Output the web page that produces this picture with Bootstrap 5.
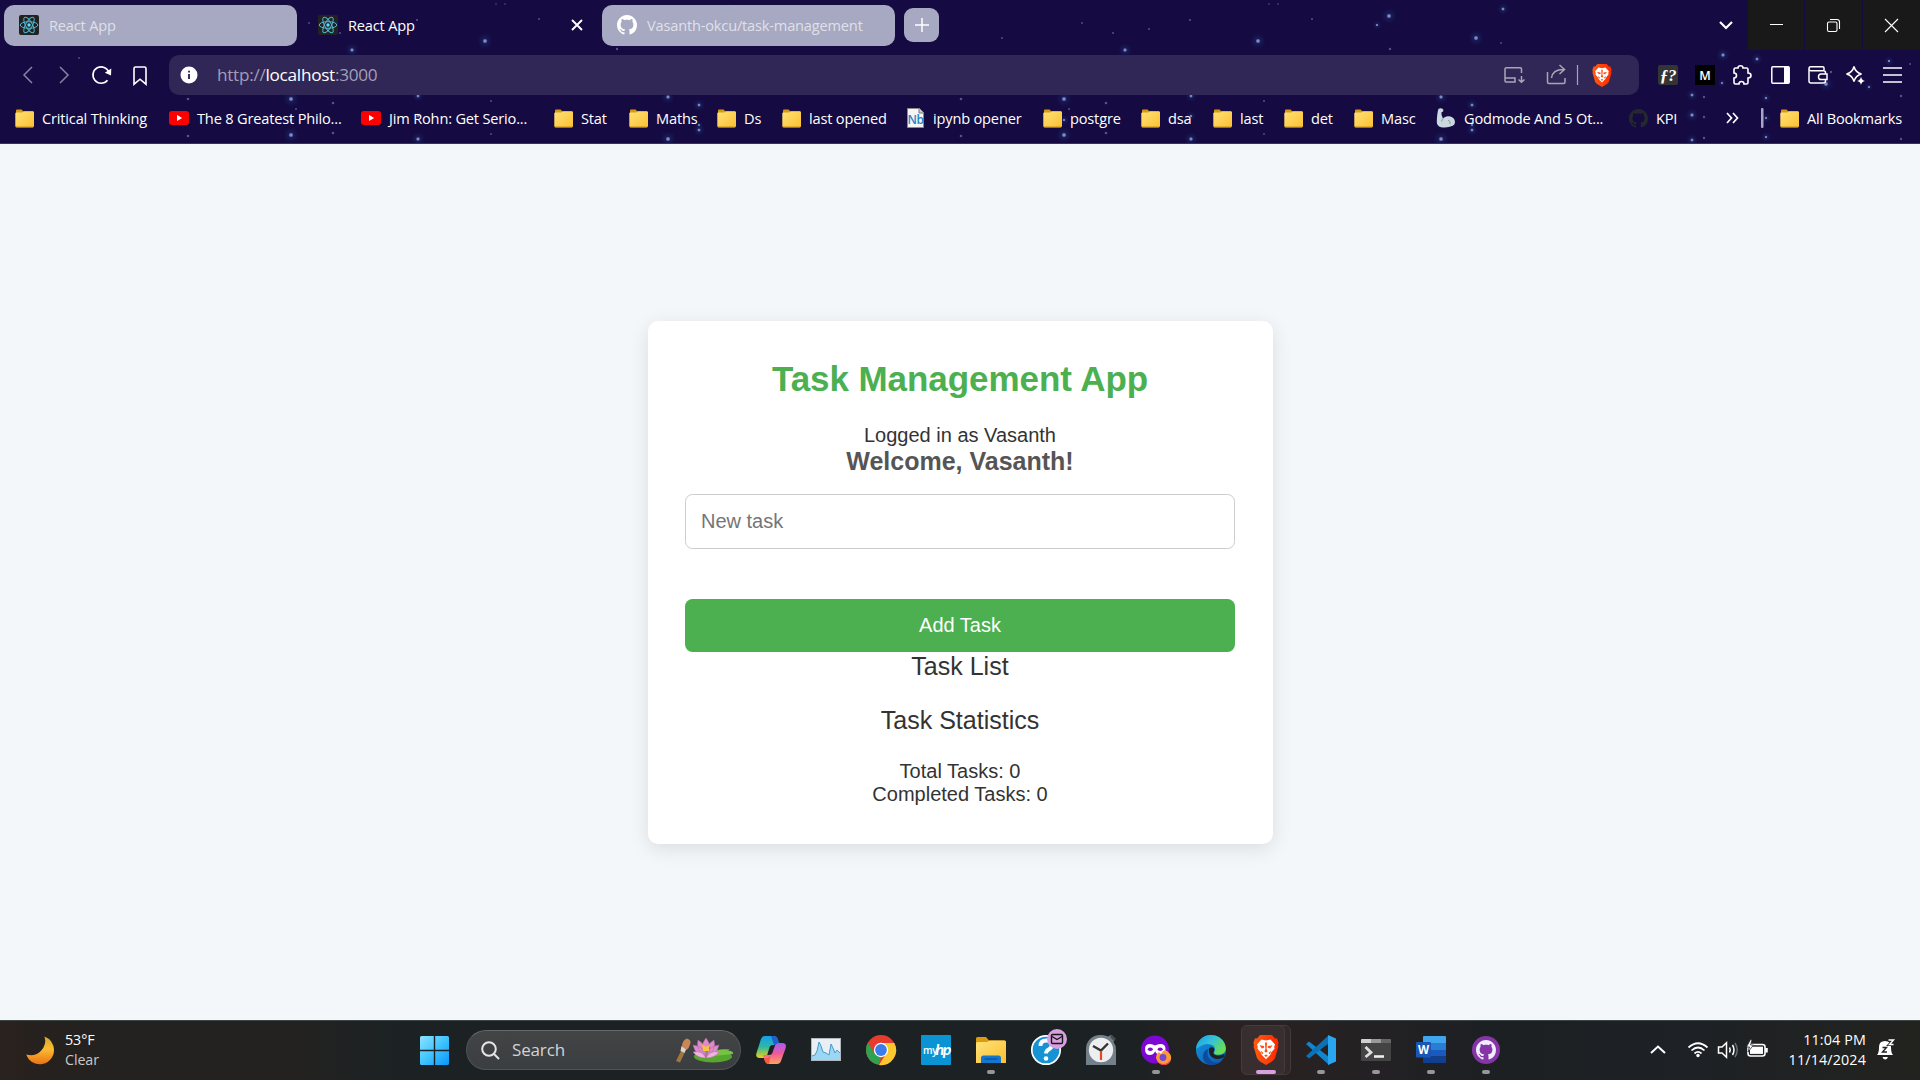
<!DOCTYPE html>
<html lang="en">
<head>
<meta charset="utf-8">
<meta name="viewport" content="width=device-width, initial-scale=1">
<title>React App</title>
<link href="https://cdn.jsdelivr.net/npm/bootstrap@5.3.0/dist/css/bootstrap.min.css" rel="stylesheet">
<style>
  body{width:1920px;height:1080px;overflow:hidden;background:#f3f7fa;font-family:"Open Sans","Noto Sans",sans-serif;font-size:15px;line-height:20px}
  svg{display:block;flex:none;overflow:visible}
  .chrome{height:144px;background:#150b42;color:#fff;border-bottom:1px solid #3a3163;font-size:14.6px;letter-spacing:-.18px}
  .stars{z-index:0;opacity:.75}
  .tabstrip{height:50px;padding:5px 0 4px 4px}
  .tab{height:41px;border-radius:10px;padding:0 0 1px 15px;gap:10px}
  .tab-a{width:293px}.tab-b{width:305px;padding:0 20px 1px 21px}.tab-c{width:293px}
  .tab-idle{background:#a7a8c1;color:#dfe0ea}
  .tab-new{width:35px;height:34px;border-radius:9px;background:#a7a8c1;margin:3px 0 0 9px}
  .winctl{margin-top:-5px}
  .tabmenu{margin-right:12px}
  .winbtn{width:57px;height:50px;background:#191919;margin-left:1px}
  .winbtn:first-of-type{width:56px}
  .toolrow{height:50px}
  .navset{width:169px;padding-left:8.5px}
  .navset>div,.extset>div{width:37.5px}
  .address{width:1470px;height:40px;border-radius:10px;background:#302756;padding:0 24px 0 11px}
  .url{font-size:17.2px;letter-spacing:-.28px;color:#a39db8;margin-left:19px}
  .extset{padding-left:10px}
  .bookmarks{display:grid;height:43px;padding:0 0 7px 15px;grid-template-columns:154px 192px 193px 75px 88px 65px 124px 137px 98px 72px 71px 70px 82px 193px 97px 35px 19px 140px;white-space:nowrap}
  .bm{gap:8px}
  .viewport{height:876px}
  .panel{width:625px;height:523px;border-radius:10px;background:#fff;padding:37.5px;box-shadow:0 5px 19px rgba(0,0,0,.1);font-family:"Liberation Sans",Arial,sans-serif;font-size:20px;line-height:23px;color:#333}
  .panel h1{font-size:35px;line-height:41px;font-weight:700;letter-spacing:-.06px;color:#4caf50;margin:0 0 25px}
  .panel h2{font-size:25px;line-height:29px;font-weight:700;color:#555;margin:0 0 18px}
  .panel h3{font-size:25px;line-height:29px;font-weight:400;margin:0 0 25px;color:#333}
  .panel .form-control{height:55px;font-size:20px;font-family:inherit;border:1px solid #ccc;border-radius:7.5px;padding:0 15px 1px;margin-bottom:50px}
  .form-control::placeholder{color:#757575;opacity:1}
  .panel .btn{height:53px;background:#4caf50;color:#fff;border:0;border-radius:7.5px;font-size:20px;padding:0 0 2px}
  .taskbar{height:60px;padding-bottom:1px;border-top:1px solid #3d4646;color:#fff;background:linear-gradient(90deg,#2a221e 0,#24211f 60px,#232220 300px,#1c2224 400px,#1c2123 1130px,#2b2122 1240px,#252123 1340px,#1c2023 1500px,#1e2125 1700px,#22231f 1920px);font-size:14.3px;letter-spacing:-.1px}
  .weather{flex:none;width:407px;padding:0 0 1px 26px;gap:11px}
  .dim{color:#c8c8c8}
  .searchbox{flex:none;width:275px;height:40px;border-radius:20px;background:linear-gradient(#424446,#3b3e40);border:1px solid #505355;border-top-color:#66696a;padding:0 7px 0 14px;margin:0 2px 0 4px;font-size:17px;letter-spacing:-.15px;color:#d2d3d4}
  .app{flex:none;width:55px;height:58px}
  .app::after{content:"";position:absolute;left:24px;top:49px;width:8px;height:4px;border-radius:2px;background:transparent}
  .open::after{background:#969696}
  .focused::after{left:18px;width:20px;background:#d9a0e0}
  .focused>i{left:3px;top:4px;width:44px;height:50px;border-radius:6px;background:#382e30;border:1px solid #453b3d}
  .focused>i:first-child{left:9px;background:#30282a}
  .tray{padding-right:26px}
  .clock{width:112px;padding:0 10px 1px 0;letter-spacing:.15px}
</style>
<script src="https://cdn.jsdelivr.net/npm/bootstrap@5.3.0/dist/js/bootstrap.bundle.min.js"></script>
</head>
<body>
<svg width="0" height="0" class="position-absolute">
  <defs>
    <linearGradient id="gFold" x1="0" y1="0" x2="1" y2="1"><stop offset="0" stop-color="#ffe27a"/><stop offset="1" stop-color="#fbc02f"/></linearGradient>
    <linearGradient id="gWin" x1="0" y1="0" x2="1" y2="1"><stop offset="0" stop-color="#8be4ff"/><stop offset=".5" stop-color="#40c4ff"/><stop offset="1" stop-color="#0a96f8"/></linearGradient>
    <linearGradient id="gMoon" x1="0" y1="0" x2="0" y2="1"><stop offset="0" stop-color="#e0a030"/><stop offset=".45" stop-color="#f9bd30"/><stop offset="1" stop-color="#ec7116"/></linearGradient>
    <linearGradient id="gCopA" x1="0" y1="0" x2="0" y2="1"><stop offset="0" stop-color="#12a0ec"/><stop offset=".5" stop-color="#2fb8a0"/><stop offset="1" stop-color="#f4d016"/></linearGradient>
    <linearGradient id="gCopB" x1="0" y1="0" x2="0" y2="1"><stop offset="0" stop-color="#a45cf5"/><stop offset=".5" stop-color="#f0599c"/><stop offset="1" stop-color="#ffa45a"/></linearGradient>
    <linearGradient id="gEdge" x1="0" y1="0" x2="1" y2=".6"><stop offset="0" stop-color="#1a9be0"/><stop offset=".5" stop-color="#33c1dc"/><stop offset="1" stop-color="#6be04c"/></linearGradient>
    <linearGradient id="gEdge2" x1="0" y1="0" x2="1" y2="1"><stop offset="0" stop-color="#1393df"/><stop offset="1" stop-color="#0c58ad"/></linearGradient>
    <linearGradient id="gBrave" x1="0" y1="0" x2="1" y2="0"><stop offset="0" stop-color="#ff5b10"/><stop offset="1" stop-color="#ff2800"/></linearGradient>
    <radialGradient id="gStar"><stop offset="0" stop-color="#cdd2ff"/><stop offset=".18" stop-color="#8d95d6"/><stop offset=".32" stop-color="#24418a" stop-opacity=".4"/><stop offset="1" stop-color="#123a78" stop-opacity="0"/></radialGradient>
    <symbol id="folder" viewBox="0 0 19 19"><path d="M1 1.500q0-1 1-1h4.500l2 2H18v3H1z" fill="#d99a10"/><path d="M.3 4.500q0-1 1-1h6l1.500-1.300h9q1.200 0 1.200 1.200v13.400q0 1.400-1.200 1.400H1.600Q.3 18.200.3 16.800z" fill="url(#gFold)"/><path d="M.5 17.300h18.300q-.3 1.200-1.300 1.200H1.600q-1 0-1.100-1.200z" fill="#d9a22a"/></symbol>
    <symbol id="react" viewBox="0 0 20 20"><rect width="20" height="20" rx="2" fill="#222"/><g fill="none" stroke="#4fb6d0" stroke-width="1"><ellipse cx="10" cy="10" rx="8.800" ry="3.300"/><ellipse cx="10" cy="10" rx="8.800" ry="3.300" transform="rotate(60 10 10)"/><ellipse cx="10" cy="10" rx="8.800" ry="3.300" transform="rotate(120 10 10)"/></g><circle cx="10" cy="10" r="1.700" fill="#61dafb"/></symbol>
    <symbol id="github" viewBox="0 0 16 16"><path d="M8 0C3.58 0 0 3.58 0 8c0 3.54 2.29 6.53 5.47 7.59.4.07.55-.17.55-.38 0-.19-.01-.82-.01-1.49-2.01.37-2.53-.49-2.69-.94-.09-.23-.48-.94-.82-1.13-.28-.15-.68-.52-.01-.53.63-.01 1.08.58 1.23.82.72 1.21 1.87.87 2.33.66.07-.52.28-.87.51-1.07-1.78-.2-3.64-.89-3.64-3.95 0-.87.31-1.59.82-2.15-.08-.2-.36-1.02.08-2.12 0 0 .67-.21 2.2.82.64-.18 1.32-.27 2-.27s1.36.09 2 .27c1.53-1.04 2.2-.82 2.2-.82.44 1.1.16 1.92.08 2.12.51.56.82 1.27.82 2.15 0 3.07-1.87 3.75-3.65 3.95.29.25.54.73.54 1.48 0 1.07-.01 1.93-.01 2.2 0 .21.15.46.55.38A8.01 8.01 0 0 0 16 8c0-4.42-3.58-8-8-8z" fill="currentColor"/></symbol>
    <symbol id="youtube" viewBox="0 0 20 14"><rect width="20" height="14" rx="3" fill="#f00"/><path d="M8 4l5.200 3L8 10z" fill="#fff"/></symbol>
    <symbol id="brave" viewBox="0 0 26 30"><g stroke="none"><path d="M7 0h12l3 3.400 2-.2 1.600 4.600-.6 2.200.4 1.500L22 23q-1 2-3 3.400L13 30l-6-3.600Q5 25 4 23L.6 11.500l.4-1.500L.4 7.800 2 3.200l2 .2z" fill="url(#gBrave)"/><path d="M8.500 4.500l4.500 1 4.500-1 4.500 5-.8 2.300.3 2-3.500 4-.5 1.700-4.500 4.700-4.500-4.700-.5-1.700-3.500-4 .3-2L4 9.500z" fill="#fff"/><path d="M6.500 10.300l4.500.8.3 1.500-2.300.8zM19.500 10.300l-4.500.8-.3 1.500 2.300.8zM12 7.500h2l-.4 6.500 1 2.500-1.600 1-1.600-1 1-2.500zM7.500 15.500l3 2.500-1.300 1.200zM18.500 15.500l-3 2.500 1.300 1.200zM11.200 20.500l1.800-1 1.800 1-1.800 1.500z" fill="#fb4a10"/></g></symbol>
    <g id="sky" fill="url(#gStar)">
      <circle cx="352" cy="50" r="7"/><circle cx="485" cy="41" r="8"/><circle cx="616" cy="16" r="8"/><circle cx="604" cy="25" r="4.500"/><circle cx="703" cy="38" r="8"/><circle cx="730" cy="9" r="6"/><circle cx="291" cy="99" r="8"/><circle cx="418" cy="96" r="6"/><circle cx="668" cy="97" r="7"/><circle cx="699" cy="105" r="6"/><circle cx="291" cy="135" r="8"/><circle cx="418" cy="139" r="7"/><circle cx="668" cy="139" r="8"/><circle cx="699" cy="130" r="6"/><circle cx="291" cy="120" r="5"/><circle cx="418" cy="116" r="5"/><circle cx="699" cy="125" r="4"/>
      <g fill="#6c6aa4"><circle cx="309" cy="23" r=".9"/><circle cx="79" cy="58" r=".9"/><circle cx="496" cy="4" r=".8"/><circle cx="505" cy="4" r=".8"/><circle cx="539" cy="19" r="1"/><circle cx="340" cy="33" r="1"/><circle cx="376" cy="29" r="1"/><circle cx="417" cy="20" r="1.100"/><circle cx="229" cy="38" r="1"/><circle cx="617" cy="49" r="1.200"/><circle cx="8" cy="16" r="1"/><circle cx="728" cy="43" r=".9"/><circle cx="68" cy="42" r=".9"/><circle cx="188" cy="99" r="1.300"/><circle cx="296" cy="109" r="1"/><circle cx="333" cy="103" r="1.300"/><circle cx="491" cy="101" r="1"/><circle cx="188" cy="136" r="1.300"/><circle cx="333" cy="133" r="1.300"/><circle cx="491" cy="134" r=".9"/></g>
    </g>
  </defs>
</svg>

<header class="chrome position-relative overflow-hidden">
  <svg class="stars position-absolute top-0 start-0" width="1920" height="143">
    <use href="#sky"/><use href="#sky" x="773"/>
    <g fill="url(#gStar)"><circle cx="1723" cy="55" r="7"/><circle cx="1757" cy="59" r="6"/><circle cx="1692" cy="95" r="6"/><circle cx="1692" cy="115" r="7"/><circle cx="1692" cy="140" r="6"/><circle cx="1766" cy="98" r="5"/><circle cx="1766" cy="118" r="5"/><circle cx="1766" cy="137" r="5"/><circle cx="1826" cy="84" r="8"/><circle cx="1889" cy="61" r="5"/><circle cx="1722" cy="83" r="4"/><circle cx="1869" cy="87" r="4"/></g>
    <g fill="#6c6aa4"><circle cx="1704" cy="97" r="1.200"/><circle cx="1704" cy="117" r="1.200"/><circle cx="1704" cy="138" r="1.200"/><circle cx="1831" cy="72" r="1.200"/><circle cx="1910" cy="64" r="1"/><circle cx="1901" cy="96" r="1.200"/><circle cx="1901" cy="139" r="1.200"/></g>
  </svg>

  <div class="tabstrip position-relative d-flex">
    <div class="tab tab-a tab-idle d-flex align-items-center"><svg width="20" height="20"><use href="#react"/></svg>React App</div>
    <div class="tab tab-b d-flex align-items-center"><svg width="20" height="20"><use href="#react"/></svg>React App
      <svg class="ms-auto" width="10" height="10" stroke="#fff" stroke-width="1.900"><path d="M0 0l10 10M10 0L0 10"/></svg></div>
    <div class="tab tab-c tab-idle d-flex align-items-center"><svg class="text-white" width="20" height="20"><use href="#github"/></svg>Vasanth-okcu/task-management</div>
    <div class="tab-new d-flex align-items-center justify-content-center"><svg width="14" height="14" stroke="#fff" stroke-width="1.500"><path d="M7 0v14M0 7h14"/></svg></div>
    <div class="winctl ms-auto d-flex">
      <svg class="tabmenu" width="14" height="50" fill="none" stroke="#fff" stroke-width="2.200"><path d="M-1 22l6 6 6-6"/></svg>
      <div class="winbtn d-flex align-items-center justify-content-center"><svg width="13" height="2"><path d="M0 .5h13" stroke="#fff"/></svg></div>
      <div class="winbtn d-flex align-items-center justify-content-center"><svg width="13" height="13" fill="none" stroke="#fff" stroke-width="1.100"><rect x=".5" y="3" width="9.500" height="9.500" rx="1.500"/><path d="M3 .5h7q2.500 0 2.500 2.500v7"/></svg></div>
      <div class="winbtn d-flex align-items-center justify-content-center"><svg width="13" height="13" stroke="#fff" stroke-width="1.100"><path d="M0 0l13 13M13 0L0 13"/></svg></div>
    </div>
  </div>

  <div class="toolrow position-relative d-flex align-items-center">
    <div class="navset d-flex">
      <div><svg class="mx-auto" width="9" height="18" fill="none" stroke="#8983a4" stroke-width="1.500"><path d="M9 1L1 9l8 8"/></svg></div>
      <div><svg class="mx-auto" width="9" height="18" fill="none" stroke="#8983a4" stroke-width="1.500"><path d="M0 1l8 8-8 8"/></svg></div>
      <div><svg class="mx-auto" width="20" height="18" fill="none" stroke="#fff" stroke-width="1.700"><path d="M15.500 14.300A8.200 8.200 0 1 1 17 6.500"/><path d="M12.800 6.800L19 9.500l.3-7z" fill="#fff" stroke="none"/></svg></div>
      <div><svg class="mx-auto" width="14" height="19" fill="none" stroke="#fff" stroke-width="1.600"><path d="M1 2.500Q1 1 2.500 1h9Q13 1 13 2.500v15.700l-6-5-6 5z"/></svg></div>
    </div>
    <div class="address d-flex align-items-center">
      <svg width="18" height="18"><circle cx="9" cy="9" r="8.500" fill="#fff"/><path d="M9 8v5M9 4.800v1.800" stroke="#302756" stroke-width="1.900"/></svg>
      <div class="url">http://<span class="text-white">localhost</span>:3000</div>
      <svg class="ms-auto" width="112" height="24" fill="none" stroke="#aaa5b5" stroke-width="1.500">
        <path d="M2 18V6q0-1.300 1.300-1.300h14Q18.500 4.700 18.500 6v4M2 15h10v4H3q-1 0-1-1zM18.500 13v6M15.500 16.500l3 2.700 3-2.700"/>
        <path d="M44.500 9v10q0 1.500 1.500 1.500h14.500q1.500 0 1.500-1.500v-4M48.500 15q1-8.500 12-8.500M56.500 2l5 4.500-5 4.500"/>
        <path d="M74.500 2v20" stroke-width="1.200"/>
        <use href="#brave" x="88" y="1" width="22" height="23"/>
      </svg>
    </div>
    <div class="extset d-flex align-items-center">
      <div><svg class="mx-auto" width="20" height="20"><rect width="20" height="20" rx="2" fill="#343434"/><text x="10" y="15.500" text-anchor="middle" font-family="Liberation Serif,serif" font-size="17" font-weight="700" font-style="italic" fill="#fff">ƒ?</text></svg></div>
      <div><svg class="mx-auto" width="20" height="20"><rect width="20" height="20" fill="#000"/><text x="10" y="14.500" text-anchor="middle" font-family="Open Sans,sans-serif" font-size="12.500" font-weight="600" fill="#fff">M</text></svg></div>
      <div><svg class="mx-auto" width="20" height="20" fill="none" stroke="#fff" stroke-width="1.600"><path d="M1 4.500Q1 3 2.500 3H5Q5 .8 7.500.8T10 3h3.500q1.500 0 1.500 1.500V8q3 0 3 2.500T15 13v4.500q0 1.500-1.500 1.500H11q0-2.500-2.500-2.500T6 19H2.500Q1 19 1 17.500V13q2.500 0 2.500-2.500T1 8z"/></svg></div>
      <div><svg class="mx-auto" width="19" height="18"><rect x=".8" y=".8" width="17.400" height="16.400" rx="1" fill="none" stroke="#fff" stroke-width="1.500"/><path d="M13 1h5v16h-5z" fill="#fff"/></svg></div>
      <div><svg class="mx-auto" width="20" height="18" fill="none" stroke="#fff" stroke-width="1.500"><path d="M16 4V2q0-1.200-1.200-1.200H3Q1 .8 1 2.500V15q0 2 2 2h12q2.500 0 2.500-2v-1.500M1 3q0 1.700 2 1.700h12.500q2 0 2 2V8M19 8h-6q-2.500 0-2.500 2.800t2.500 2.700h6z"/></svg></div>
      <div><svg class="mx-auto" width="20" height="20"><path d="M9 1.500q1.500 6 7.500 7.500-6 1.500-7.500 7.500Q7.500 10.500 1.500 9 7.500 7.500 9 1.500z" fill="none" stroke="#fff" stroke-width="1.500"/><path d="M16 11.500q.6 3.900 4 4.500-3.400.6-4 4-.6-3.400-4-4 3.400-.6 4-4.500z" fill="#fff"/></svg></div>
      <div><svg class="mx-auto" width="19" height="16" stroke="#fff" stroke-width="1.500"><path d="M0 1h19M0 8h19M0 15h19"/></svg></div>
    </div>
  </div>

  <nav class="bookmarks position-relative align-items-center">
    <div class="bm d-flex align-items-center"><svg width="19" height="19"><use href="#folder"/></svg>Critical Thinking</div>
    <div class="bm d-flex align-items-center"><svg width="20" height="14"><use href="#youtube"/></svg>The 8 Greatest Philo...</div>
    <div class="bm d-flex align-items-center"><svg width="20" height="14"><use href="#youtube"/></svg>Jim Rohn: Get Serio...</div>
    <div class="bm d-flex align-items-center"><svg width="19" height="19"><use href="#folder"/></svg>Stat</div>
    <div class="bm d-flex align-items-center"><svg width="19" height="19"><use href="#folder"/></svg>Maths</div>
    <div class="bm d-flex align-items-center"><svg width="19" height="19"><use href="#folder"/></svg>Ds</div>
    <div class="bm d-flex align-items-center"><svg width="19" height="19"><use href="#folder"/></svg>last opened</div>
    <div class="bm d-flex align-items-center"><svg width="19" height="20"><path d="M1.500.5h12l4 4v15h-16z" fill="#f5f5f5" stroke="#888"/><path d="M13 .5v4.500h4.500" fill="#ccc" stroke="#777"/><text x="9.500" y="16" text-anchor="middle" font-family="Open Sans,sans-serif" font-size="12" font-weight="600" fill="#2a82c4" letter-spacing="-.5">Nb</text></svg>ipynb opener</div>
    <div class="bm d-flex align-items-center"><svg width="19" height="19"><use href="#folder"/></svg>postgre</div>
    <div class="bm d-flex align-items-center"><svg width="19" height="19"><use href="#folder"/></svg>dsa</div>
    <div class="bm d-flex align-items-center"><svg width="19" height="19"><use href="#folder"/></svg>last</div>
    <div class="bm d-flex align-items-center"><svg width="19" height="19"><use href="#folder"/></svg>det</div>
    <div class="bm d-flex align-items-center"><svg width="19" height="19"><use href="#folder"/></svg>Masc</div>
    <div class="bm d-flex align-items-center"><svg width="20" height="20"><path d="M2.500.8Q5-.5 6.500.8q1.500 1.300.6 2.600L5.500 4.200q-.6 2.600 1.500 6.300 1.500-2 4.700-2.200 5-.3 6.800 3.500 1.500 4-1.800 6Q11 20.500 5 19.200.8 18 .8 14 1 5 2.500.8z" fill="#cbd8df"/><path d="M7 10.500q-1.500 1.500-1.300 3M12 12q3 1.300 2 4" fill="none" stroke="#8498a4"/></svg>Godmode And 5 Ot...</div>
    <div class="bm d-flex align-items-center"><svg width="19" height="19" color="#24292e"><use href="#github"/></svg>KPI</div>
    <svg width="12" height="10" fill="none" stroke="#fff" stroke-width="1.700"><path d="M1 0l4.500 5L1 10M7 0l4.500 5L7 10"/></svg>
    <svg width="3" height="20"><rect width="2.500" height="20" rx="1" fill="#a9a6c6"/></svg>
    <div class="bm d-flex align-items-center"><svg width="19" height="19"><use href="#folder"/></svg>All Bookmarks</div>
  </nav>
</header>

<main class="viewport d-flex align-items-center justify-content-center">
  <section class="panel text-center">
    <h1>Task Management App</h1>
    <div>Logged in as Vasanth</div>
    <h2>Welcome, Vasanth!</h2>
    <input class="form-control" type="text" placeholder="New task">
    <button class="btn w-100 d-block" type="button">Add Task</button>
    <h3>Task List</h3>
    <h3>Task Statistics</h3>
    <div>Total Tasks: 0</div>
    <div>Completed Tasks: 0</div>
  </section>
</main>

<footer class="taskbar d-flex align-items-center">
  <div class="weather d-flex align-items-center">
    <svg width="28" height="28"><path d="M18.500.5A14.500 14.500 0 0 1 28 14 14.200 14.200 0 0 1 .3 18.500 14.500 14.500 0 0 0 18.500.5z" fill="url(#gMoon)"/></svg>
    <div>53°F<br><span class="dim">Clear</span></div>
  </div>
  <div class="app position-relative d-flex align-items-center justify-content-center"><svg width="29" height="29" fill="url(#gWin)"><path d="M1.500 0H13.800v13.800H0V1.500Q0 0 1.500 0zM15.200 0h12.300Q29 0 29 1.500v12.300H15.200zM0 15.200h13.800V29H1.500Q0 29 0 27.500zM15.200 15.200H29v12.300q0 1.500-1.500 1.500H15.200z"/></svg></div>
  <div class="searchbox d-flex align-items-center">
    <svg width="19" height="19" fill="none" stroke="#e4e6e8" stroke-width="2"><circle cx="8" cy="8" r="6.800"/><path d="M13 13l5 5"/></svg>
    <span class="ps-2 ms-1 flex-grow-1">Search</span>
    <svg width="57" height="25">
      <path d="M5 13l3.500 2L4 24.500 0 23z" fill="#a3763f"/><path d="M5.500 8l5 2.500-2 4.500-4-2z" fill="#dcd6d2"/><path d="M6 8.500q0-6 5-8 5 1.500 3 6-1 4-3.500 5.500z" fill="#c98755"/>
      <ellipse cx="37" cy="18.500" rx="19" ry="6" fill="#55a82c"/><path d="M37 18l20-2q1-3-5-3.500l-7 3 9-4q-8-1-14 1z" fill="#78c344"/>
      <g fill="#dd8cc9" stroke="#b562a4" stroke-width=".5"><path d="M30 19Q19 17 17 7q11 1 13 12zM30 19q11-2 13-12-11 1-13 12zM30 19Q19 12 22 2q9 5 8 17zM30 19q11-7 8-17-9 5-8 17zM30 19q-8-9 0-19 8 10 0 19z"/><path d="M30 20q-9 0-13-6 9-2 13 6zM30 20q9 0 13-6-9-2-13 6z" fill="#efb3df"/></g><path d="M26 6l4 3 4-3-1 7h-6z" fill="#f6c340"/>
    </svg>
  </div>
  <div class="app position-relative d-flex align-items-center justify-content-center"><svg width="30" height="28"><path d="M9 0h9q3 0 4 4l1.500 5H17q-3 0-3.700 3L11 19.500Q10 22 7 22H4q-5 0-3.500-5L5 3q1-3 4-3z" fill="url(#gCopA)"/><path d="M15 0h3q3 0 4 4l1.500 5H18z" fill="#1f5fd0"/><path d="M21 28h-8q-3 0-4-3l-2-6h6q3 0 3.700-3L19 9.500q1-2.500 4-2.500h3q5 0 3.700 5L25 25q-1 3-4 3z" fill="url(#gCopB)"/><path d="M13 28q-4 0-5-6h3l3.500-2z" fill="#f35b45"/></svg></div>
  <div class="app position-relative d-flex align-items-center justify-content-center"><svg width="30" height="24"><rect x=".5" y=".5" width="29" height="22" fill="#e9eff4" stroke="#aeb8be"/><path d="M1 18l3-1 2-4 2-9 2 4 2 6 3 1 3 2 2-11 2 4 2 5 2-3 3 3v7H1z" fill="#9bd7f4"/><path d="M1 18l3-1 2-4 2-9 2 4 2 6 3 1 3 2 2-11 2 4 2 5 2-3 3 3" fill="none" stroke="#479bc4"/></svg></div>
  <div class="app position-relative d-flex align-items-center justify-content-center"><svg width="30" height="30"><circle cx="15" cy="15" r="15" fill="#e63c2f"/><path d="M2 7.500L8.500 19 15 22l-2.500 7.800A15 15 0 0 1 2 7.500z" fill="#2ea24e"/><path d="M15 8h13.300A15 15 0 0 1 13 30l7.500-12z" fill="#fbc82e"/><circle cx="15" cy="15" r="7.200" fill="#fff"/><circle cx="15" cy="15" r="5.900" fill="#3b7ded"/></svg></div>
  <div class="app position-relative d-flex align-items-center justify-content-center"><svg width="30" height="30"><rect width="30" height="30" rx="1" fill="#0a94d4"/><text x="2" y="18.500" font-family="Open Sans,sans-serif" font-size="10" font-weight="600" letter-spacing="-.4" fill="#fff">my</text><text x="14.500" y="19.500" font-family="Lato,sans-serif" font-size="16" font-weight="700" font-style="italic" letter-spacing="-1.500" fill="#fff">hp</text></svg></div>
  <div class="app open position-relative d-flex align-items-center justify-content-center"><svg width="30" height="26"><path d="M0 1.500Q0 0 1.500 0H10l3 3.500h15.500Q30 3.500 30 5v3H0z" fill="#dc9b0c"/><path d="M0 6.500q0-1.500 1.500-1.500H11l2.500-1.500h15Q30 3.500 30 5v21H0z" fill="url(#gFold)"/><path d="M5 26v-5q0-2.500 2.500-2.500h15Q25 18.500 25 21v5z" fill="#1377d0"/><path d="M8.500 22h13" stroke="#0b4f96" stroke-width="1.200"/></svg></div>
  <div class="app position-relative d-flex align-items-center justify-content-center"><svg width="30" height="30"><circle cx="15" cy="15" r="14.200" fill="#1593d4" stroke="#fff" stroke-width="1.700"/><path d="M9.500 11q0-5.500 5.700-5.500 5.500 0 5.500 4.500 0 3-3 4.500-2.700 1.500-2.700 4" fill="none" stroke="#fff" stroke-width="3.800"/><circle cx="15" cy="23.500" r="2.300" fill="#fff"/><circle cx="26" cy="4" r="10" fill="#d9a0e0"/><rect x="20.500" y="-.5" width="11" height="9" rx="1" fill="none" stroke="#171717" stroke-width="1.400"/><path d="M21 1.500l5 3 5-3" fill="none" stroke="#171717" stroke-width="1.400"/></svg></div>
  <div class="app position-relative d-flex align-items-center justify-content-center"><svg width="30" height="30"><path d="M0 14A14 14 0 0 1 14 0h2q3 0 6 1.500L25 0l4 4-1.500 3Q30 10 30 15v15H0z" fill="#738089"/><path d="M24 2l2-2 4 4-2 2z" fill="#454b4f"/><circle cx="15" cy="15" r="12.200" fill="#eceeef"/><path d="M7 11l8 4.500 7-7" fill="none" stroke="#333" stroke-width="2.400"/><path d="M15 16v9" stroke="#e24822" stroke-width="2.200"/></svg></div>
  <div class="app open position-relative d-flex align-items-center justify-content-center"><svg width="30" height="30"><circle cx="14" cy="14.500" r="14" fill="#7d08d4"/><path d="M4 14q0-5 5-5 3 0 5 1.500Q16 9 19.500 9q5 0 5 5 0 6-5 6-3.500 0-5.300-3.500Q12 20 9 20q-5 0-5-6z" fill="#fff"/><ellipse cx="9.300" cy="14.300" rx="2.500" ry="1.800" fill="#7d08d4"/><ellipse cx="19.200" cy="14.300" rx="2.500" ry="1.800" fill="#7d08d4"/><path d="M15 23q0-4 3-6l2 2q1-3 4-4 3 1 5 4 2 3 .5 7-2 4-6.500 4-6 0-8-7z" fill="#ff9a32"/><path d="M15.500 24q2 5 7 5t7-5q-1 6-7 6-5 0-7-6z" fill="#f2325f"/><circle cx="22" cy="22.500" r="3.400" fill="#7248d8"/></svg></div>
  <div class="app position-relative d-flex align-items-center justify-content-center"><svg width="30" height="30"><circle cx="15" cy="15" r="15" fill="url(#gEdge2)"/><path d="M0 14A15 15 0 0 1 15 0q9 0 13.500 8 3 7-.5 10-3 2.500-8.500 1.500-2.500-1-1-3Q20 13 17 10.500 10 6 0 14z" fill="url(#gEdge)"/><path d="M12.500 14q-3 7 3 12 6 4 12-2-4 6-12.500 6-9-2-8-10 1-5 5.500-6z" fill="#0f4b9c"/><path d="M13 13.500q2.500-2.500 5 0 .7 1.500-.5 3.500-.5 1.500.7 2.500 4 2.500 10.300-.5L28.300 22q-5 3-9.800 1.500-6.500-2.500-5.500-10z" fill="#1e2124"/></svg></div>
  <div class="app open focused position-relative d-flex align-items-center justify-content-center"><i class="position-absolute"></i><i class="position-absolute"></i><svg class="position-relative" width="26" height="30"><use href="#brave"/></svg></div>
  <div class="app open position-relative d-flex align-items-center justify-content-center"><svg width="30" height="30"><path d="M0 9l3-2.500L23 22v8z" fill="#1285cf"/><path d="M0 21l3 2.500L23 8V0z" fill="#0a72b8"/><path d="M22 0l8 3.500v23L22 30V0z" fill="#2aa6f1"/></svg></div>
  <div class="app open position-relative d-flex align-items-center justify-content-center"><svg width="30" height="23"><rect width="30" height="22" rx="1" fill="#444"/><path d="M0 1q0-1 1-1h9v4H0z" fill="#d0d0d0"/><path d="M10 0h10v4H10z" fill="#999"/><path d="M20 0h9q1 0 1 1v3H20z" fill="#666"/><path d="M4.500 8l5.500 5.500L4.500 18" fill="none" stroke="#ddd" stroke-width="2.800"/><path d="M13 17.500h10" stroke="#eee" stroke-width="2.600"/></svg></div>
  <div class="app open position-relative d-flex align-items-center justify-content-center"><svg width="30" height="28"><path d="M7 1q0-1 1-1h21q1 0 1 1v6H7z" fill="#41a5ee"/><path d="M7 7h23v7H7z" fill="#2b7cd3"/><path d="M7 14h23v6.500H7z" fill="#185abd"/><path d="M7 20.500h23V26q0 1-1 1H8q-1 0-1-1z" fill="#103f91"/><rect y="6" width="15" height="15.500" rx="1" fill="#1857b8"/><text x="7.500" y="18" text-anchor="middle" font-family="Open Sans,sans-serif" font-weight="700" font-size="11.500" fill="#fff">W</text></svg></div>
  <div class="app open position-relative d-flex align-items-center justify-content-center"><svg width="28" height="28" color="#eef"><circle cx="14" cy="14" r="14" fill="#8634a6"/><use href="#github" x="4" y="4" width="20" height="20"/></svg></div>
  <div class="tray d-flex align-items-center ms-auto">
    <svg width="119" height="40" fill="none" stroke="#fff" stroke-width="1.800">
      <path d="M6 23l7-6.500 7 6.500" stroke-width="2"/>
      <path d="M43.500 17.500q9.500-8.500 19 0M46.500 20.500q6.500-6 13 0M49.500 23.500q3.500-3.200 7 0" stroke-width="1.700"/><circle cx="53" cy="25.500" r="1.700" fill="#fff" stroke="none"/>
      <path d="M73.500 17h3.500l4.500-4.300v14.600L77 23h-3.500zM84.500 17.500q1.500 2.500 0 5M87.500 15q3 5 0 10" stroke-width="1.500"/><path d="M90 13q4.500 7 0 14" stroke="#6d6f72" stroke-width="1.400"/>
      <rect x="103" y="14.500" width="17" height="11.500" rx="2.500" stroke-width="1.600"/><rect x="105" y="16.700" width="13" height="7.200" fill="#fff" stroke="none"/><path d="M121.500 18v4.500" stroke-width="2.500"/><path d="M105.500 9.500l-4 7.500h3l-1.500 5 5.500-7h-3l1.500-5z" fill="#fff" stroke="#1e2125" stroke-width=".7"/>
    </svg>
    <div class="clock text-end">11:04 PM<br>11/14/2024</div>
    <svg width="18" height="20"><path d="M1 15q2-2 2-8Q3 1 9 1t6 6q0 6 2 8z" fill="#fff"/><path d="M6.500 17h5.500q-1 2.500-2.800 2.500T6.500 17z" fill="#fff"/><path d="M12.500 0h5l-4 4.500h4" fill="none" stroke="#202225" stroke-width="3"/><path d="M12.500 0h5l-4 4.500h4" fill="none" stroke="#fff" stroke-width="1.400"/><path d="M6.500 7.500h4l-4 4.500h4.500" fill="none" stroke="#202225" stroke-width="1.400"/></svg>
  </div>
</footer>
</body>
</html>
